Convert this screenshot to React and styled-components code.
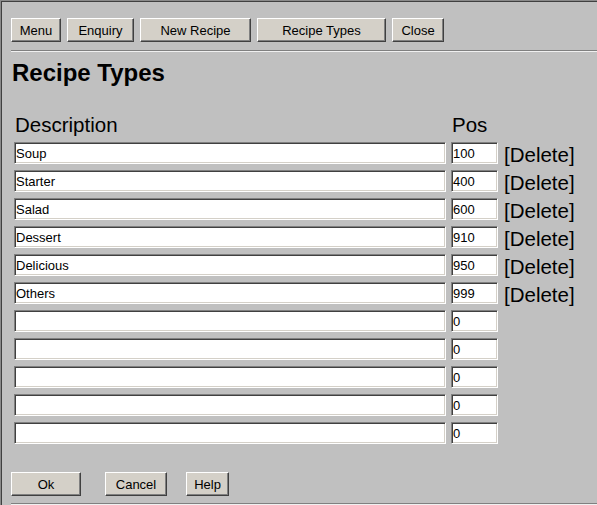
import React from "react";
import styled, { createGlobalStyle } from "styled-components";

const GlobalStyle = createGlobalStyle`
  html, body {
    margin: 0;
    padding: 0;
    background: #c0c0c0;
  }
  body {
    font-family: "Liberation Sans", Arial, sans-serif;
  }
`;

const Frame = styled.div`
  box-sizing: border-box;
  width: 597px;
  height: 505px;
  overflow: hidden;
  padding: 17px 0 0 9px;
  border-top: 1px solid #8a8a8a;
  border-left: 1px solid #8a8a8a;
  box-shadow: inset 1px 1px 0 #404040;
  background: #c0c0c0;
  color: #000;
`;

const Toolbar = styled.div`
  display: flex;
  gap: 6px;
  padding-left: 1px;
`;

const Button = styled.button`
  box-sizing: border-box;
  width: ${(p) => p.$w}px;
  height: 24px;
  margin-left: ${(p) => p.$ml || 0}px;
  padding: 0;
  background: #d4d0c8;
  border: 1px solid;
  border-color: #fff #404040 #404040 #fff;
  box-shadow: inset -1px -1px 0 #808080;
  font-family: "Liberation Sans", Arial, sans-serif;
  font-size: 13px;
  color: #000;
  cursor: pointer;
`;

const Rule = styled.hr`
  margin: ${(p) => p.$mt}px 0 0 1px;
  height: 0;
  border: 0;
  border-top: 1px solid #808080;
  border-bottom: 1px solid #f0f0f0;
`;

const Title = styled.h1`
  margin: 7px 0 0 2px;
  font-size: 24px;
  line-height: 28px;
  font-weight: bold;
`;

const Table = styled.div`
  display: grid;
  grid-template-columns: 432px 47px auto;
  column-gap: 5px;
  row-gap: 6px;
  margin: 26px 0 0 4px;
`;

const Head = styled.div`
  font-size: 20.5px;
  line-height: 23px;
  padding-left: 1px;
`;

const Field = styled.input`
  box-sizing: border-box;
  width: 100%;
  height: 22px;
  margin: 0;
  padding: 0 1px;
  background: #fff;
  border: 1px solid;
  border-color: #808080 #fff #fff #808080;
  box-shadow: inset 1px 1px 0 #404040, inset -1px -1px 0 #d4d0c8;
  font-family: "Liberation Sans", Arial, sans-serif;
  font-size: 13px;
  color: #000;
  outline: none;
`;

const DeleteLink = styled.span`
  height: 22px;
  line-height: 26px;
  font-size: 20.5px;
  margin-left: 1px;
  white-space: nowrap;
  cursor: pointer;
`;

const Footer = styled.div`
  display: flex;
  margin-top: 28px;
  padding-left: 1px;
`;

const rows = [
  ["Soup", "100"],
  ["Starter", "400"],
  ["Salad", "600"],
  ["Dessert", "910"],
  ["Delicious", "950"],
  ["Others", "999"],
  ["", "0", true],
  ["", "0", true],
  ["", "0", true],
  ["", "0", true],
  ["", "0", true],
];

const App = () => {
  return (
    <>
      <GlobalStyle />
      <Frame>
        <Toolbar>
          <Button $w={50}>Menu</Button>
          <Button $w={67}>Enquiry</Button>
          <Button $w={111}>New Recipe</Button>
          <Button $w={129}>Recipe Types</Button>
          <Button $w={52}>Close</Button>
        </Toolbar>
        <Rule $mt={8} />
        <Title>Recipe Types</Title>
        <Table>
          <Head>Description</Head>
          <Head>Pos</Head>
          <div />
          {rows.map(([name, pos, blank], i) => (
            <React.Fragment key={i}>
              <Field type="text" defaultValue={name} />
              <Field type="text" defaultValue={pos} />
              {blank ? <div /> : <DeleteLink>[Delete]</DeleteLink>}
            </React.Fragment>
          ))}
        </Table>
        <Footer>
          <Button $w={70}>Ok</Button>
          <Button $w={62} $ml={24}>Cancel</Button>
          <Button $w={43} $ml={19}>Help</Button>
        </Footer>
        <Rule $mt={7} />
      </Frame>
    </>
  );
};

export default App;
